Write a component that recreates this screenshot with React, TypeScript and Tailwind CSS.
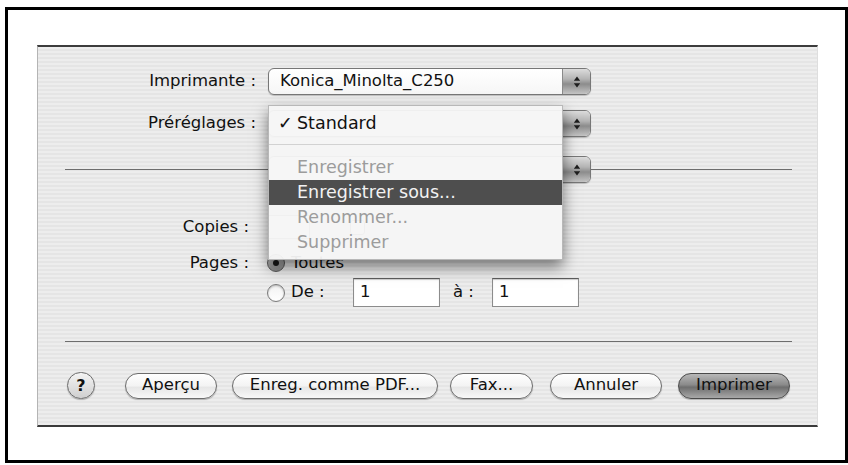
import React from "react";

function Arrows() {
  return (
    <svg width="8" height="14" viewBox="0 0 8 14">
      <path d="M4 1.5 L7.2 5.8 H0.8 Z M4 12.5 L7.2 8.2 H0.8 Z" fill="#1e1e1e" />
    </svg>
  );
}

function Popup({ text }: { text?: string }) {
  return (
    <div className="flex h-[27px] w-[323px] overflow-hidden rounded-[6px] border border-[#777777] bg-[linear-gradient(#ffffff,#f6f6f6)] shadow-[0_1px_1px_rgba(0,0,0,0.2)]">
      <div className="flex flex-1 items-center pl-[11px] text-[16.5px] leading-none text-[#111]">{text}</div>
      <div className="flex w-[28px] items-center justify-center border-l border-[#8a8a8a] bg-[linear-gradient(#dcdcdc,#b4b4b4_40%,#8c8c8c_60%,#c4c4c4)]">
        <Arrows />
      </div>
    </div>
  );
}

function Radio({ on }: { on?: boolean }) {
  return (
    <div
      className={
        on
          ? "flex h-[18px] w-[18px] items-center justify-center rounded-full border border-[#5a5a5a] bg-[linear-gradient(#c8c8c8,#8a8a8a)]"
          : "flex h-[18px] w-[18px] items-center justify-center rounded-full border border-[#7a7a7a] bg-[linear-gradient(#f2f2f2,#ffffff)] shadow-[inset_0_1px_2px_rgba(0,0,0,0.25)]"
      }
    >
      {on ? <div className="h-[6px] w-[6px] rounded-full bg-[#1a1a1a]" /> : null}
    </div>
  );
}

function Field({ value, w }: { value: string; w: string }) {
  return (
    <div className={"flex h-[29px] items-center border border-[#8c8c8c] border-t-[#5c5c5c] bg-white pl-[6px] text-[16.5px] leading-none text-[#111] shadow-[inset_0_1px_1px_rgba(0,0,0,0.2)] " + w}>
      {value}
    </div>
  );
}

function Btn({ label, w, ml, def }: { label: string; w: string; ml: string; def?: boolean }) {
  return (
    <div
      className={
        (def
          ? "bg-[linear-gradient(#b8b8b8,#8a8a8a_45%,#6e6e6e_55%,#a8a8a8)] border-[#4a4a4a] "
          : "bg-[linear-gradient(#ffffff,#f3f3f3_50%,#e6e6e6_55%,#f8f8f8)] border-[#6c6c6c] ") +
        "flex h-[26px] items-center justify-center rounded-full border text-[16.5px] leading-none text-[#111] shadow-[0_1px_1px_rgba(0,0,0,0.25)] " +
        w +
        " " +
        ml
      }
    >
      {label}
    </div>
  );
}

export default function App() {
  return (
    <div className="h-[465px] w-[848px] overflow-hidden bg-white pl-[5px] pt-[7px] font-['DejaVu_Sans','Liberation_Sans',sans-serif]">
      <div className="h-[456px] w-[843px] border-[3px] border-black pl-[29px] pt-[35px]">
        <div className="relative flex h-[382px] w-[781px] flex-col border-b-2 border-l border-r border-t-2 border-b-[#3a3a3a] border-l-[#b4b4b4] border-r-[#dedede] border-t-[#3c3c3c] bg-[repeating-linear-gradient(180deg,#ededed_0px,#ededed_2px,#e5e5e5_2px,#e5e5e5_4px)] text-[#111]">
          {/* Imprimante */}
          <div className="mt-[21px] flex items-center">
            <div className="w-[218px] text-right text-[16.5px] leading-none">Imprimante :</div>
            <div className="ml-[12px]">
              <Popup text="Konica_Minolta_C250" />
            </div>
          </div>
          {/* Préréglages (covered by its open menu) */}
          <div className="mt-[15px] flex items-center">
            <div className="w-[218px] text-right text-[16.5px] leading-none">Préréglages :</div>
            <div className="ml-[12px]">
              <Popup />
            </div>
          </div>
          {/* separator with panel popup */}
          <div className="mt-[19px] flex items-center">
            <div className="ml-[27px] h-px w-[203px] bg-[#6e6e6e]" />
            <Popup />
            <div className="h-px w-[201px] bg-[#6e6e6e]" />
          </div>
          {/* Copies */}
          <div className="mt-[32px] flex h-[24px] items-center">
            <div className="w-[211px] text-right text-[16.5px] leading-none">Copies :</div>
            <div className="ml-[19px] h-[24px] w-[42px] border border-[#8c8c8c] bg-white" />
            <div className="ml-[40px] h-[15px] w-[15px] rounded-[3px] border border-[#7a7a7a] bg-white" />
          </div>
          {/* Pages / Toutes */}
          <div className="mt-[14px] flex h-[20px] items-center">
            <div className="w-[211px] text-right text-[16.5px] leading-none">Pages :</div>
            <div className="ml-[18px]">
              <Radio on />
            </div>
            <div className="ml-[6px] text-[16.5px] leading-none">Toutes</div>
          </div>
          {/* De / à */}
          <div className="mt-[5px] flex items-center">
            <div className="ml-[229px] flex w-[86px] items-center">
              <Radio />
              <div className="ml-[6px] text-[16.5px] leading-none">De :</div>
            </div>
            <Field value="1" w="w-[87px]" />
            <div className="ml-[13px] w-[39px] text-[16.5px] leading-none">à :</div>
            <Field value="1" w="w-[87px]" />
          </div>
          {/* bottom separator */}
          <div className="ml-[27px] mt-[34px] h-px w-[727px] bg-[#6e6e6e]" />
          {/* buttons */}
          <div className="mt-[30px] flex items-center">
            <div className="ml-[29px] flex h-[27px] w-[28px] items-center justify-center rounded-full border border-[#6c6c6c] bg-[linear-gradient(#f4f4f4,#cfcfcf)] text-[16px] font-bold leading-none text-[#111] shadow-[0_1px_1px_rgba(0,0,0,0.25)]">
              ?
            </div>
            <Btn label="Aperçu" w="w-[92px]" ml="ml-[30px]" />
            <Btn label="Enreg. comme PDF..." w="w-[206px]" ml="ml-[15px]" />
            <Btn label="Fax..." w="w-[83px]" ml="ml-[12px]" />
            <Btn label="Annuler" w="w-[112px]" ml="ml-[17px]" />
            <Btn label="Imprimer" w="w-[112px]" ml="ml-[16px]" def />
          </div>

          {/* open Préréglages menu */}
          <div className="absolute left-[230px] top-[58px] flex h-[155px] w-[295px] flex-col border border-[#b8b8b8] bg-[rgba(246,246,246,0.95)] pt-[5px] text-[17.5px] leading-none shadow-[0_7px_14px_rgba(0,0,0,0.5)]">
            <div className="flex h-[26px] items-center pl-[9px] text-[#111]">
              <span className="inline-block w-[19px]">✓</span>
              <span>Standard</span>
            </div>
            <div className="h-[18px] pt-[7px]">
              <div className="h-px w-full bg-[#d2d2d2]" />
            </div>
            <div className="flex h-[25px] items-center pl-[28px] text-[#9c9c9c]">Enregistrer</div>
            <div className="flex h-[25px] items-center bg-[#4e4e4e] pl-[28px] text-[#f2f2f2]">Enregistrer sous...</div>
            <div className="flex h-[25px] items-center pl-[28px] text-[#9c9c9c]">Renommer...</div>
            <div className="flex h-[25px] items-center pl-[28px] text-[#9c9c9c]">Supprimer</div>
          </div>
        </div>
      </div>
    </div>
  );
}
